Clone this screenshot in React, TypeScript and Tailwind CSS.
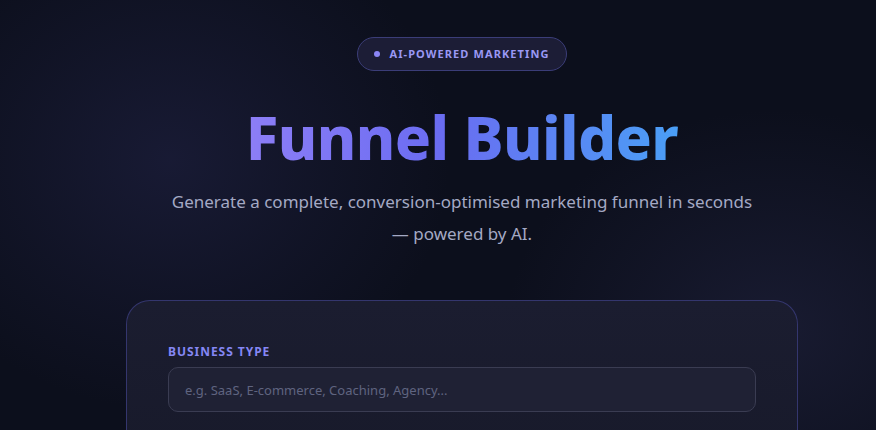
export default function App() {
  return (
    <div
      className="relative h-[430px] w-full overflow-hidden bg-[#0c0f1c] pl-[48px] pt-[37px] text-white"
      style={{ fontFamily: '"Noto Sans", "Open Sans", sans-serif' }}
    >
      {/* background glows */}
      <div className="pointer-events-none absolute -left-[110px] -top-[90px] h-[500px] w-[560px] rounded-full bg-[radial-gradient(closest-side,rgba(28,30,60,0.75),transparent)]" />
      <div className="pointer-events-none absolute -right-[170px] top-[110px] h-[440px] w-[540px] rounded-full bg-[radial-gradient(closest-side,rgba(30,32,58,0.7),transparent)]" />

      <div className="relative mx-auto flex max-w-[700px] flex-col items-center">
        <div className="inline-flex h-[34px] items-center gap-[9px] rounded-full border border-[#3b3d78] bg-[#1c1d36] px-[16px]">
          <span className="h-[6px] w-[6px] rounded-full bg-[#8b85f5]" />
          <span className="text-[11px] font-bold tracking-[0.1em] text-[#9a98f4]">
            AI-POWERED MARKETING
          </span>
        </div>

        <h1 className="mt-[26px] bg-[linear-gradient(90deg,#8d7ef7_0%,#6a6cf1_45%,#4a9ff6_100%)] bg-clip-text text-[60px] font-extrabold leading-[80px] tracking-[-0.01em] text-transparent">
          Funnel Builder
        </h1>

        <p className="mt-[9px] max-w-[600px] text-center text-[17px] leading-[32px] text-[#a4a9c4]">
          Generate a complete, conversion-optimised marketing funnel in seconds — powered by AI.
        </p>
      </div>

      <div className="relative mx-auto mt-[50px] w-[672px] rounded-t-[24px] border border-b-0 border-[#34366e] bg-[linear-gradient(180deg,#1b1d30,#181a2b)] px-[41px] pb-10 pt-[42px]">
        <label className="block text-[12px] font-bold tracking-[0.08em] text-[#8587f4]">
          BUSINESS TYPE
        </label>
        <input
          className="mt-[6px] h-[45px] w-full rounded-[10px] border border-[#3a3c52] bg-[#1f2134] px-4 text-[13px] text-white outline-none placeholder:text-[#5f6480]"
          placeholder="e.g. SaaS, E-commerce, Coaching, Agency..."
        />
      </div>
    </div>
  );
}
